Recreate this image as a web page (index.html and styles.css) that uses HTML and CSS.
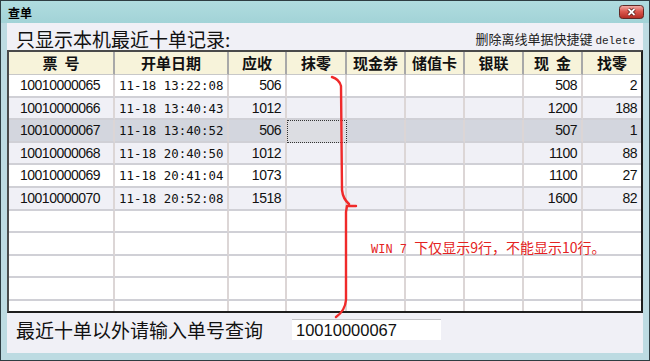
FILE: index.html
```html
<!DOCTYPE html>
<html lang="zh">
<head>
    <meta charset="UTF-8">
    <title>查单</title>
    <link rel="stylesheet" href="styles.css">
</head>
<body>
    <div class="window">
        <div class="titlebar">
            <span class="title">查单</span>
            <span class="close">
                <svg width="25" height="14" viewBox="0 0 25 14">
                    <defs>
                        <linearGradient id="cg" x1="0" y1="0" x2="0" y2="1">
                            <stop offset="0" stop-color="#f2b4ac"/>
                            <stop offset="0.45" stop-color="#dc5a50"/>
                            <stop offset="1" stop-color="#b02a22"/>
                        </linearGradient>
                    </defs>
                    <rect x="0.5" y="0.5" width="24" height="13" rx="3" fill="url(#cg)" stroke="#5e2a26"/>
                    <path d="M9.5 4 L15.5 10 M15.5 4 L9.5 10" stroke="#4a1410" stroke-width="3.2"/>
                    <path d="M9.5 4 L15.5 10 M15.5 4 L9.5 10" stroke="#fff" stroke-width="1.8"/>
                </svg>
            </span>
        </div>

        <div class="client">
            <div class="top">
                <span class="heading">只显示本机最近十单记录:</span>
                <span class="hint">删除离线单据快捷键 <span class="key">delete</span></span>
            </div>

            <div class="grid">
                <div class="row head">
                    <div>票&nbsp;&nbsp;号</div><div>开单日期</div><div>应收</div><div>抹零</div><div>现金券</div><div>储值卡</div><div>银联</div><div>现&nbsp;&nbsp;金</div><div>找零</div>
                </div>
                <div class="row">
                    <div class="id">10010000065</div><div class="date">11-18 13:22:08</div><div class="num">506</div><div></div><div></div><div></div><div></div><div class="num">508</div><div class="num">2</div>
                </div>
                <div class="row alt">
                    <div class="id">10010000066</div><div class="date">11-18 13:40:43</div><div class="num">1012</div><div></div><div></div><div></div><div></div><div class="num">1200</div><div class="num">188</div>
                </div>
                <div class="row sel">
                    <div class="id">10010000067</div><div class="date">11-18 13:40:52</div><div class="num">506</div><div class="focus"></div><div></div><div></div><div></div><div class="num">507</div><div class="num">1</div>
                </div>
                <div class="row alt">
                    <div class="id">10010000068</div><div class="date">11-18 20:40:50</div><div class="num">1012</div><div></div><div></div><div></div><div></div><div class="num">1100</div><div class="num">88</div>
                </div>
                <div class="row">
                    <div class="id">10010000069</div><div class="date">11-18 20:41:04</div><div class="num">1073</div><div></div><div></div><div></div><div></div><div class="num">1100</div><div class="num">27</div>
                </div>
                <div class="row alt">
                    <div class="id">10010000070</div><div class="date">11-18 20:52:08</div><div class="num">1518</div><div></div><div></div><div></div><div></div><div class="num">1600</div><div class="num">82</div>
                </div>
                <div class="row"><div></div><div></div><div></div><div></div><div></div><div></div><div></div><div></div><div></div></div>
                <div class="row"><div></div><div></div><div></div><div></div><div></div><div></div><div></div><div></div><div></div></div>
                <div class="row"><div></div><div></div><div></div><div></div><div></div><div></div><div></div><div></div><div></div></div>
                <div class="row"><div></div><div></div><div></div><div></div><div></div><div></div><div></div><div></div><div></div></div>
                <div class="row"><div></div><div></div><div></div><div></div><div></div><div></div><div></div><div></div><div></div></div>
            </div>

            <div class="bottom">
                <label class="query-label" for="billNo">最近十单以外请输入单号查询</label>
                <input class="query-input" id="billNo" type="text" value="10010000067">
            </div>
        </div>

        <!-- hand-drawn annotation on top of the screenshot -->
        <svg class="annot" width="650" height="361" viewBox="0 0 650 361">
            <path d="M332,77 Q339,79 341,86 L342,190 Q343,199 349,204 M356,206 L347,206 L346,212 L346,300 Q345,311 336,317"
                  fill="none" stroke="#f02a2a" stroke-width="2.4" stroke-linecap="round" stroke-linejoin="round"/>
        </svg>
        <div class="note"><span class="note-en">WIN 7 </span>下仅显示9行，不能显示10行。</div>
    </div>
</body>
</html>
```

FILE: styles.css
```css
* {
    box-sizing: border-box;
}

body {
    margin: 0;
    font-family: "Noto Sans CJK SC", sans-serif;
    color: #111;
}

.window {
    position: relative;
    width: 650px;
    height: 361px;
    border: 1px solid #2e3d42;
    background: #bddbe2;
    display: flex;
    flex-direction: column;
}

.titlebar {
    height: 22px;
    background: linear-gradient(#b0dcdf, #a2d3d7);
    display: flex;
    align-items: center;
    justify-content: space-between;
    padding: 0 5px 0 7px;
}

.title {
    font-size: 12px;
    font-weight: bold;
    color: #000;
}

.close {
    display: flex;
}

.client {
    height: 330px;
    margin: 0 6px;
    background: #f0f0f6;
    display: flex;
    flex-direction: column;
}

.top {
    height: 27px;
    display: flex;
    justify-content: space-between;
    align-items: flex-start;
    padding: 0 8px 0 9px;
}

.heading {
    font-size: 19px;
    line-height: 23px;
    padding-top: 4px;
}

.hint {
    font-size: 13px;
    line-height: 20px;
    padding-top: 6px;
    color: #222;
}

.key {
    font-family: "Liberation Mono", monospace;
    font-size: 11px;
}

.grid {
    height: 263px;
    border: 2px solid;
    border-color: #4a4a4a #1e1e1e #1e1e1e #4a4a4a;
    background: #fff;
    overflow: hidden;
}

.row {
    display: grid;
    grid-template-columns: 106px 114px 58px 60px 59px 59px 59px 59px 58px;
    height: 22.6px;
}

.row > div {
    border-right: 2px solid #dcd6d6;
    border-bottom: 2px solid #d0d0d6;
    padding: 0 4px;
    font-family: "Liberation Sans", sans-serif;
    font-size: 14px;
    letter-spacing: -0.5px;
    line-height: 21px;
    white-space: nowrap;
    overflow: hidden;
}

.row > div:last-child {
    border-right: none;
}

.head {
    height: 23px;
    background: #f7f3da;
}

.head > div {
    font-family: "Noto Sans CJK SC", sans-serif;
    font-size: 15px;
    font-weight: bold;
    letter-spacing: 0;
    text-align: center;
    line-height: 22px;
    border-right-color: #a8a8a8;
    border-bottom: 1px solid #c8c8c8;
}

.alt {
    background: #f0f0f6;
}

.sel {
    background: #d3d6de;
}

.row > .id {
    padding-left: 11px;
}

.row > .date {
    font-family: "DejaVu Sans Mono", monospace;
    font-size: 12.4px;
    letter-spacing: 0;
}

.row > .num {
    text-align: right;
}

.row > .focus {
    background: #dcdde2;
    border: 1px dotted #333;
}

.bottom {
    flex: 1;
    display: flex;
    align-items: flex-start;
    padding: 6px 0 0 9px;
}

.query-label {
    font-size: 19px;
    line-height: 21px;
    width: 276px;
}

.query-input {
    width: 149px;
    height: 21px;
    border: none;
    border-top: 1px solid #c4c4c8;
    background: #fff;
    padding: 0 4px;
    font-family: "Liberation Sans", sans-serif;
    font-size: 16.5px;
    color: #111;
    outline: none;
}

.annot {
    position: absolute;
    left: -1px;
    top: -1px;
    pointer-events: none;
}

.note {
    position: absolute;
    left: 370px;
    top: 237px;
    font-size: 14px;
    line-height: 18px;
    color: #e42222;
    white-space: nowrap;
}

.note-en {
    font-family: "Liberation Mono", monospace;
    font-size: 12px;
}
```
